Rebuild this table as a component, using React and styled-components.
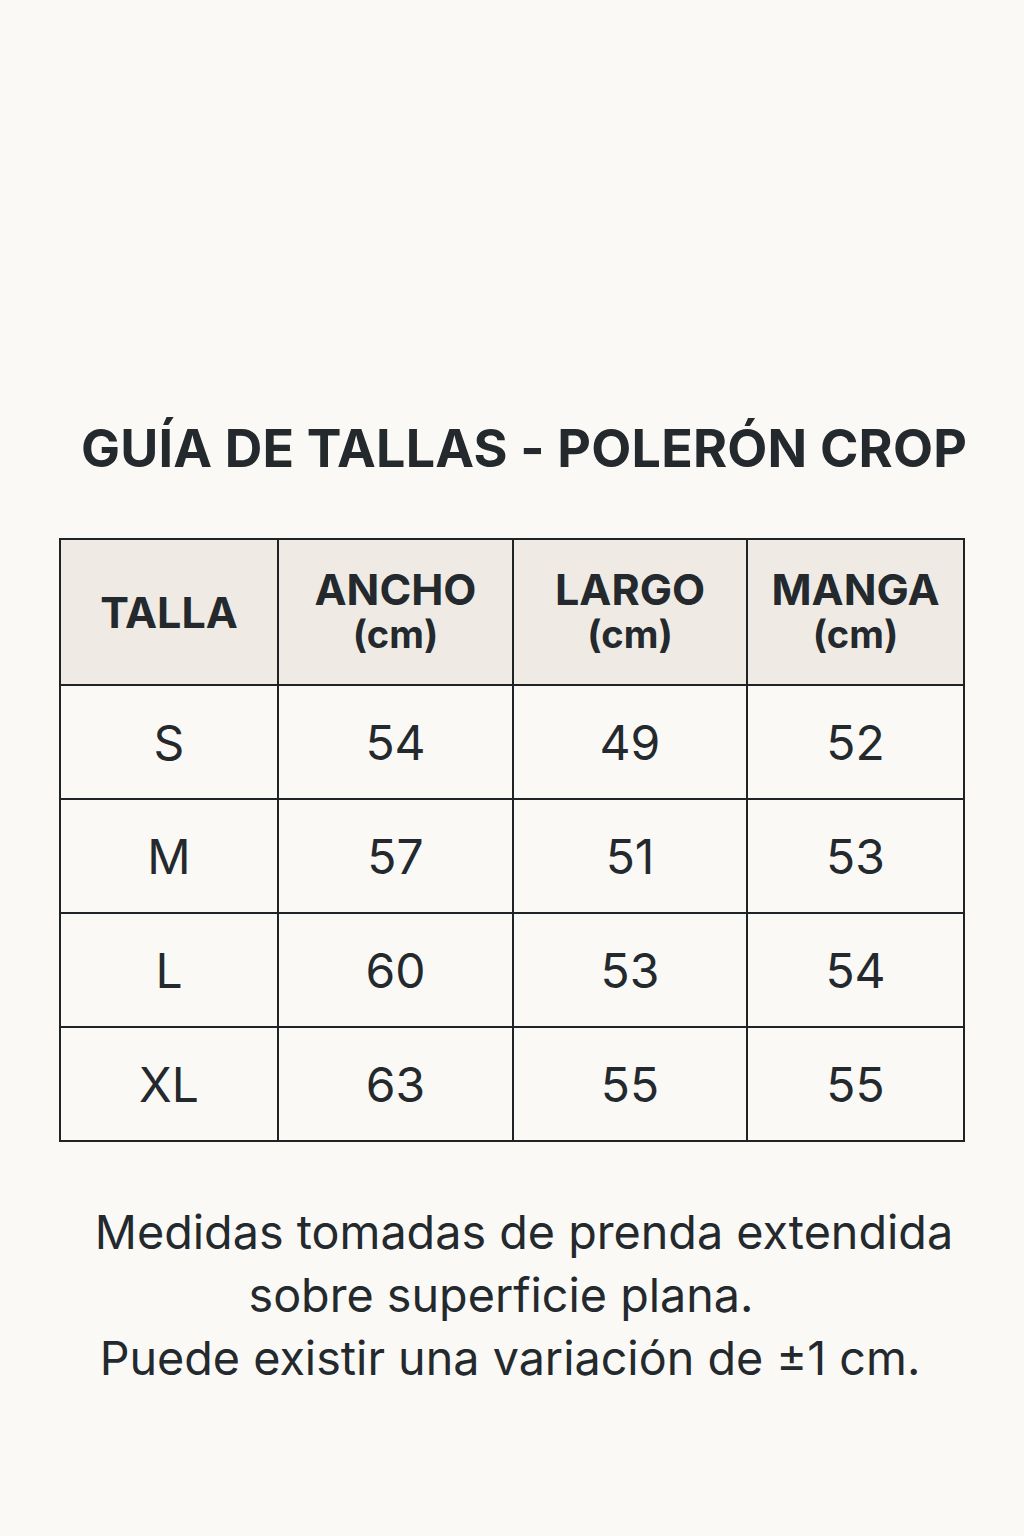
import React from 'react'
import styled, { createGlobalStyle } from 'styled-components';

const rows = [
  ['S', '54', '49', '52'],
  ['M', '57', '51', '53'],
  ['L', '60', '53', '54'],
  ['XL', '63', '55', '55'],
];

const columns = [
  { label: 'TALLA', width: 218 },
  { label: 'ANCHO', unit: '(cm)', width: 235 },
  { label: 'LARGO', unit: '(cm)', width: 234 },
  { label: 'MANGA', unit: '(cm)', width: 217 },
];

const App = () => {
  return (
    <>
      <GlobalStyle />
      <Page>
        <Title>GUÍA DE TALLAS - POLERÓN CROP</Title>

        <SizeTable>
          <colgroup>
            {columns.map((c) => (
              <col key={c.label} style={{ width: c.width }} />
            ))}
          </colgroup>
          <thead>
            <tr>
              {columns.map((c) => (
                <HeadCell key={c.label}>
                  {c.label}
                  {c.unit && <Unit>{c.unit}</Unit>}
                </HeadCell>
              ))}
            </tr>
          </thead>
          <tbody>
            {rows.map((r) => (
              <BodyRow key={r[0]}>
                {r.map((v, i) => (
                  <Cell key={i}>{v}</Cell>
                ))}
              </BodyRow>
            ))}
          </tbody>
        </SizeTable>

        <Note>
          <NoteLine>Medidas tomadas de prenda extendida</NoteLine>
          <NoteLine $shift={-23}>sobre superficie plana.</NoteLine>
          <NoteLine $shift={-14}>Puede existir una variación de ±1 cm.</NoteLine>
        </Note>
      </Page>
    </>
  );
};

export default App;

const GlobalStyle = createGlobalStyle`
  html, body {
    margin: 0;
    padding: 0;
    background: #fbf9f5;
  }
`
const Page = styled.div`
  width: 1024px;
  height: 1536px;
  box-sizing: border-box;
  padding-top: 423px;

  display: flex;
  flex-direction: column;
  align-items: center;

  background: #fbf9f5;
  color: #23292d;
  font-family: Inter, "Liberation Sans", sans-serif;
`
const Title = styled.h1`
  margin: 0 0 63px 0;
  padding-left: 24px;

  font-size: 52px;
  line-height: 1;
  font-weight: 700;
  letter-spacing: 0.2px;
  white-space: nowrap;
`
const SizeTable = styled.table`
  width: 904px;
  border-collapse: collapse;
  table-layout: fixed;
  border: 2px solid #1f2326;
`
const HeadCell = styled.th`
  height: 144px;
  padding: 0;
  border: 2px solid #1f2326;
  background: #efebe4;

  font-size: 43px;
  line-height: 45px;
  font-weight: 700;
  text-align: center;
  vertical-align: middle;
`
const Unit = styled.span`
  display: block;
  font-size: 38px;
`
const BodyRow = styled.tr`
  height: 114px;
`
const Cell = styled.td`
  padding: 0;
  border: 2px solid #1f2326;

  font-size: 48px;
  font-weight: 400;
  text-align: center;
  vertical-align: middle;
`
const Note = styled.div`
  margin-top: 59px;

  display: flex;
  flex-direction: column;
  align-items: center;

  font-size: 46.7px;
  line-height: 63px;
  font-weight: 400;
`
const NoteLine = styled.div`
  padding-left: 24px;
  transform: translateX(${(p) => p.$shift || 0}px);
  white-space: nowrap;
`
